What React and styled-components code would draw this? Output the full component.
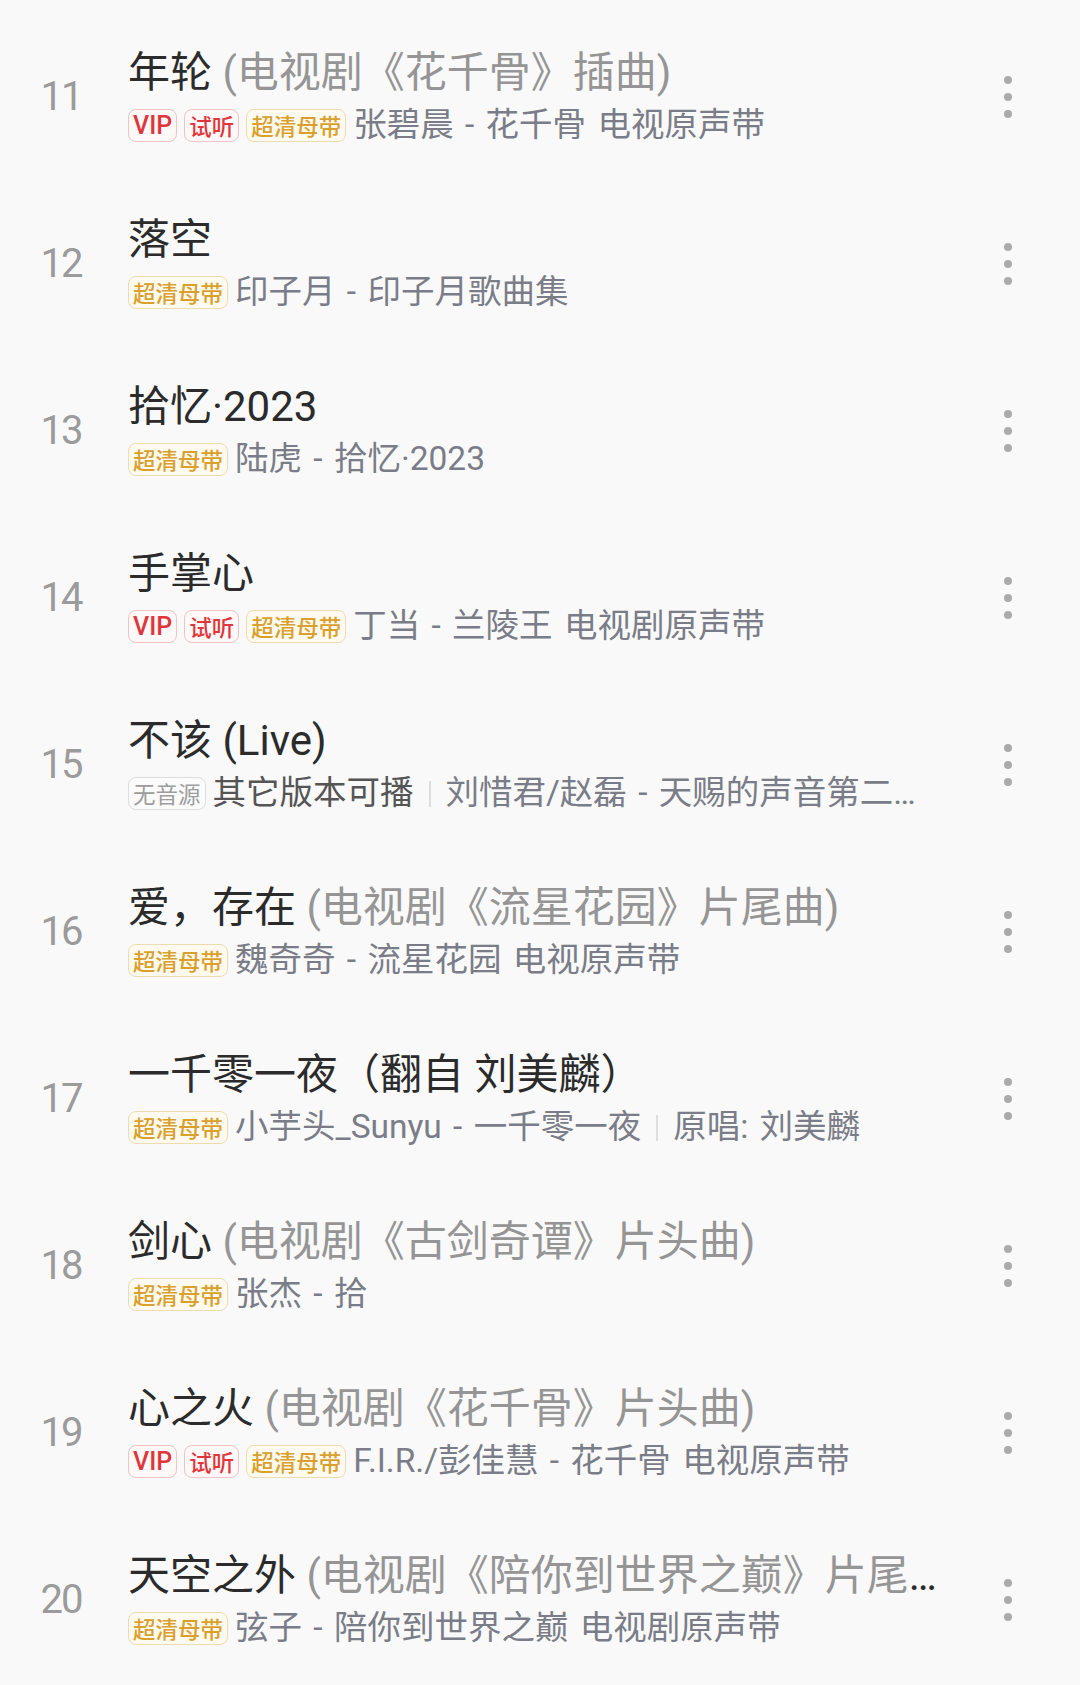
import React from "react";
import styled, { createGlobalStyle } from "styled-components";

const songs = [
  {
    no: 11,
    title: "年轮",
    note: "(电视剧《花千骨》插曲)",
    tags: ["vip", "try", "hq"],
    sub: ["张碧晨 - 花千骨 电视原声带"],
  },
  { no: 12, title: "落空", tags: ["hq"], sub: ["印子月 - 印子月歌曲集"] },
  { no: 13, title: "拾忆·2023", tags: ["hq"], sub: ["陆虎 - 拾忆·2023"] },
  {
    no: 14,
    title: "手掌心",
    tags: ["vip", "try", "hq"],
    sub: ["丁当 - 兰陵王 电视剧原声带"],
  },
  {
    no: 15,
    title: "不该 (Live)",
    tags: ["none"],
    hint: "其它版本可播",
    sub: ["刘惜君/赵磊 - 天赐的声音第二季 第9期"],
  },
  {
    no: 16,
    title: "爱，存在",
    note: "(电视剧《流星花园》片尾曲)",
    tags: ["hq"],
    sub: ["魏奇奇 - 流星花园 电视原声带"],
  },
  {
    no: 17,
    title: "一千零一夜（翻自 刘美麟）",
    tags: ["hq"],
    sub: ["小芋头_Sunyu - 一千零一夜", "原唱: 刘美麟"],
  },
  {
    no: 18,
    title: "剑心",
    note: "(电视剧《古剑奇谭》片头曲)",
    tags: ["hq"],
    sub: ["张杰 - 拾"],
  },
  {
    no: 19,
    title: "心之火",
    note: "(电视剧《花千骨》片头曲)",
    tags: ["vip", "try", "hq"],
    sub: ["F.I.R./彭佳慧 - 花千骨 电视原声带"],
  },
  {
    no: 20,
    title: "天空之外",
    note: "(电视剧《陪你到世界之巅》片尾曲)",
    tags: ["hq"],
    sub: ["弦子 - 陪你到世界之巅 电视剧原声带"],
  },
];

const tagLabels = {
  vip: "VIP",
  try: "试听",
  hq: "超清母带",
  none: "无音源",
};

const App = () => {
  return (
    <>
      <GlobalStyle />
      <List>
        {songs.map((song) => (
          <Row key={song.no}>
            <Num>{song.no}</Num>
            <Info>
              <Title>
                {song.title}
                {song.note ? <Note> {song.note}</Note> : null}
              </Title>
              <SubLine>
                {song.tags.map((tag) => (
                  <Tag key={tag} $kind={tag}>
                    {tagLabels[tag]}
                  </Tag>
                ))}
                <SubText>
                  {song.hint ? (
                    <>
                      <Hint>{song.hint}</Hint>
                      <Sep />
                    </>
                  ) : null}
                  {song.sub.map((part, i) => (
                    <React.Fragment key={part}>
                      {i > 0 ? <Sep /> : null}
                      {part}
                    </React.Fragment>
                  ))}
                </SubText>
              </SubLine>
            </Info>
            <Menu>
              <Dot />
              <Dot />
              <Dot />
            </Menu>
          </Row>
        ))}
      </List>
    </>
  );
};

export default App;

const GlobalStyle = createGlobalStyle`
  body {
    margin: 0;
    background: #f9f9f9;
    font-family: Roboto, "Noto Sans CJK SC", sans-serif;
  }
`;

const List = styled.div`
  padding-top: 13px;
  height: 1685px;
  box-sizing: border-box;
  overflow: hidden;
`;

const Row = styled.div`
  display: grid;
  grid-template-columns: 122px 1fr 24px;
  column-gap: 6px;
  align-items: center;
  height: 167px;
  padding-right: 60px;
`;

const Num = styled.div`
  text-align: center;
  font-size: 40px;
  color: #9b9b9b;
  letter-spacing: -2px;
`;

const Info = styled.div`
  display: flex;
  flex-direction: column;
  gap: 9px;
  min-width: 0;
  margin-right: 40px;
`;

const Title = styled.div`
  font-size: 42px;
  line-height: 48px;
  color: #2b2b2b;
  white-space: nowrap;
  overflow: hidden;
  text-overflow: ellipsis;
`;

const Note = styled.span`
  color: #959595;
`;

const SubLine = styled.div`
  display: flex;
  align-items: center;
  gap: 7px;
  height: 38px;
  min-width: 0;
  margin-right: 22px;
`;

const tagColors = {
  vip: { color: "#df363c", border: "#f0c3c5", bg: "#fff8f8" },
  try: { color: "#df363c", border: "#f0c3c5", bg: "#fff8f8" },
  hq: { color: "#d9a02e", border: "#eddcb0", bg: "#fffaef" },
  none: { color: "#9d9d9d", border: "#dddddd", bg: "#fbfbfb" },
};

const Tag = styled.span`
  flex-shrink: 0;
  box-sizing: border-box;
  height: 33px;
  padding: 0 4px;
  display: flex;
  align-items: center;
  border-radius: 8px;
  font-size: ${({ $kind }) => ($kind === "vip" ? "25px" : "22.5px")};
  font-weight: ${({ $kind }) => ($kind === "none" ? 400 : 500)};
  color: ${({ $kind }) => tagColors[$kind].color};
  border: 1.5px solid ${({ $kind }) => tagColors[$kind].border};
  background: ${({ $kind }) => tagColors[$kind].bg};
`;

const SubText = styled.span`
  font-size: 33.5px;
  line-height: 38px;
  word-spacing: 3px;
  color: #7a7d87;
  white-space: nowrap;
  overflow: hidden;
  text-overflow: ellipsis;
  min-width: 0;
`;

const Hint = styled.span`
  color: #555555;
`;

const Sep = styled.span`
  display: inline-block;
  width: 2px;
  height: 26px;
  margin: 0 15px;
  background: #dedede;
  vertical-align: -3px;
`;

const Menu = styled.div`
  display: flex;
  flex-direction: column;
  align-items: center;
  gap: 9px;
`;

const Dot = styled.span`
  width: 8px;
  height: 8px;
  border-radius: 50%;
  background: #ababab;
`;
